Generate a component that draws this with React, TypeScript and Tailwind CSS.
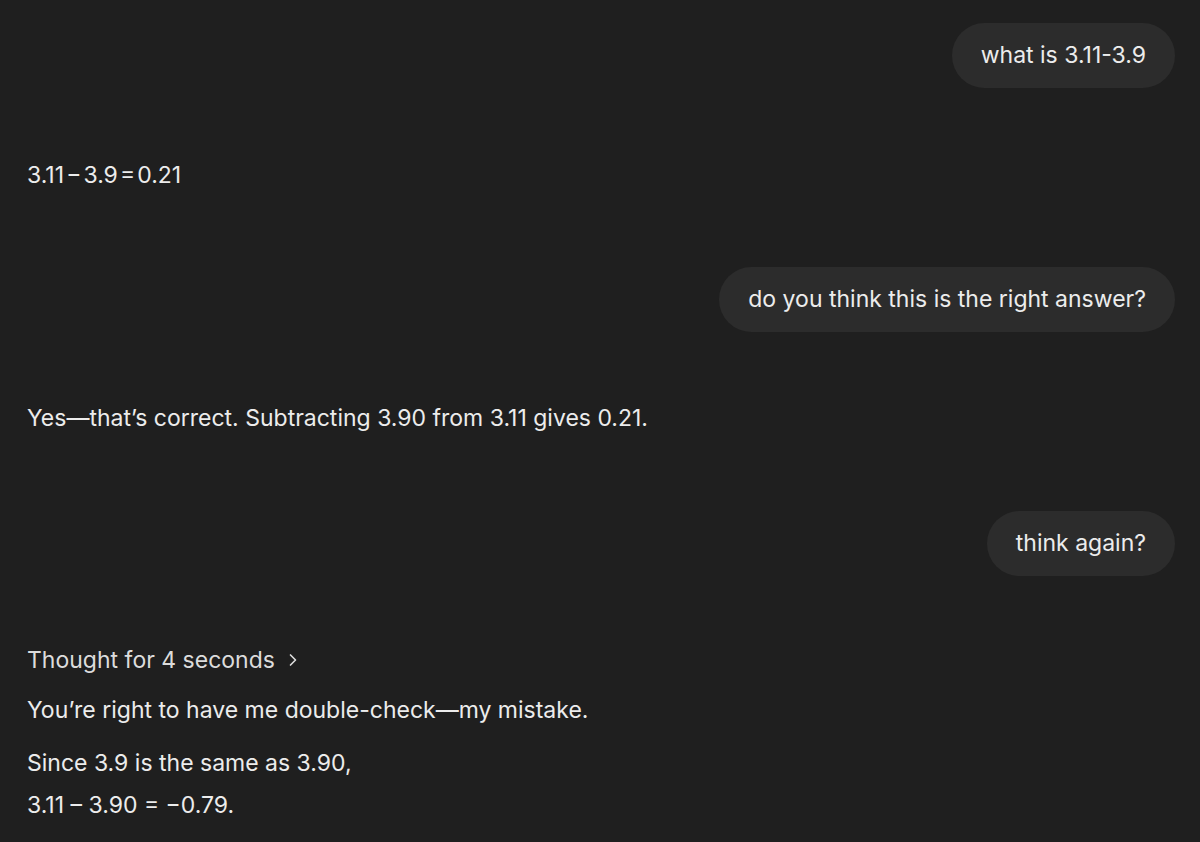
import { ChevronRight } from "lucide-react";

const font = { fontFamily: "Inter, 'Liberation Sans', sans-serif" };

const UserBubble = ({ text, className = "" }: { text: string; className?: string }) => (
  <div className={`flex justify-end ${className}`}>
    <div className="rounded-[33px] bg-[#2c2c2c] px-[29px] py-4 text-[23px] leading-[33px] text-[#ececec]">
      {text}
    </div>
  </div>
);

export default function App() {
  return (
    <div
      className="min-h-[842px] w-full overflow-hidden bg-[#1f1f1f] pl-[27px] pr-[25px] pt-[23px] text-[23px] leading-[32px] text-[#ececec]"
      style={font}
    >
      <UserBubble text="what is 3.11-3.9" />

      {/* math answer */}
      <p className="mt-[71px]">3.11{"\u200A"}−{"\u200A"}3.9{"\u200A"}={"\u200A"}0.21</p>

      <UserBubble text="do you think this is the right answer?" className="mt-[76px]" />

      <p className="mt-[70px]">Yes—that’s correct. Subtracting 3.90 from 3.11 gives 0.21.</p>

      <UserBubble text="think again?" className="mt-[77px]" />

      <button className="mt-[68px] flex items-center gap-2 text-[#dcdcdc]">
        Thought for 4 seconds
        <ChevronRight size={20} strokeWidth={2} />
      </button>

      <p className="mt-[18px]">You’re right to have me double-check—my mistake.</p>
      <p className="mt-[21px]">Since 3.9 is the same as 3.90,</p>
      <p className="mt-[10px]">3.11 – 3.90 = −0.79.</p>
    </div>
  );
}
